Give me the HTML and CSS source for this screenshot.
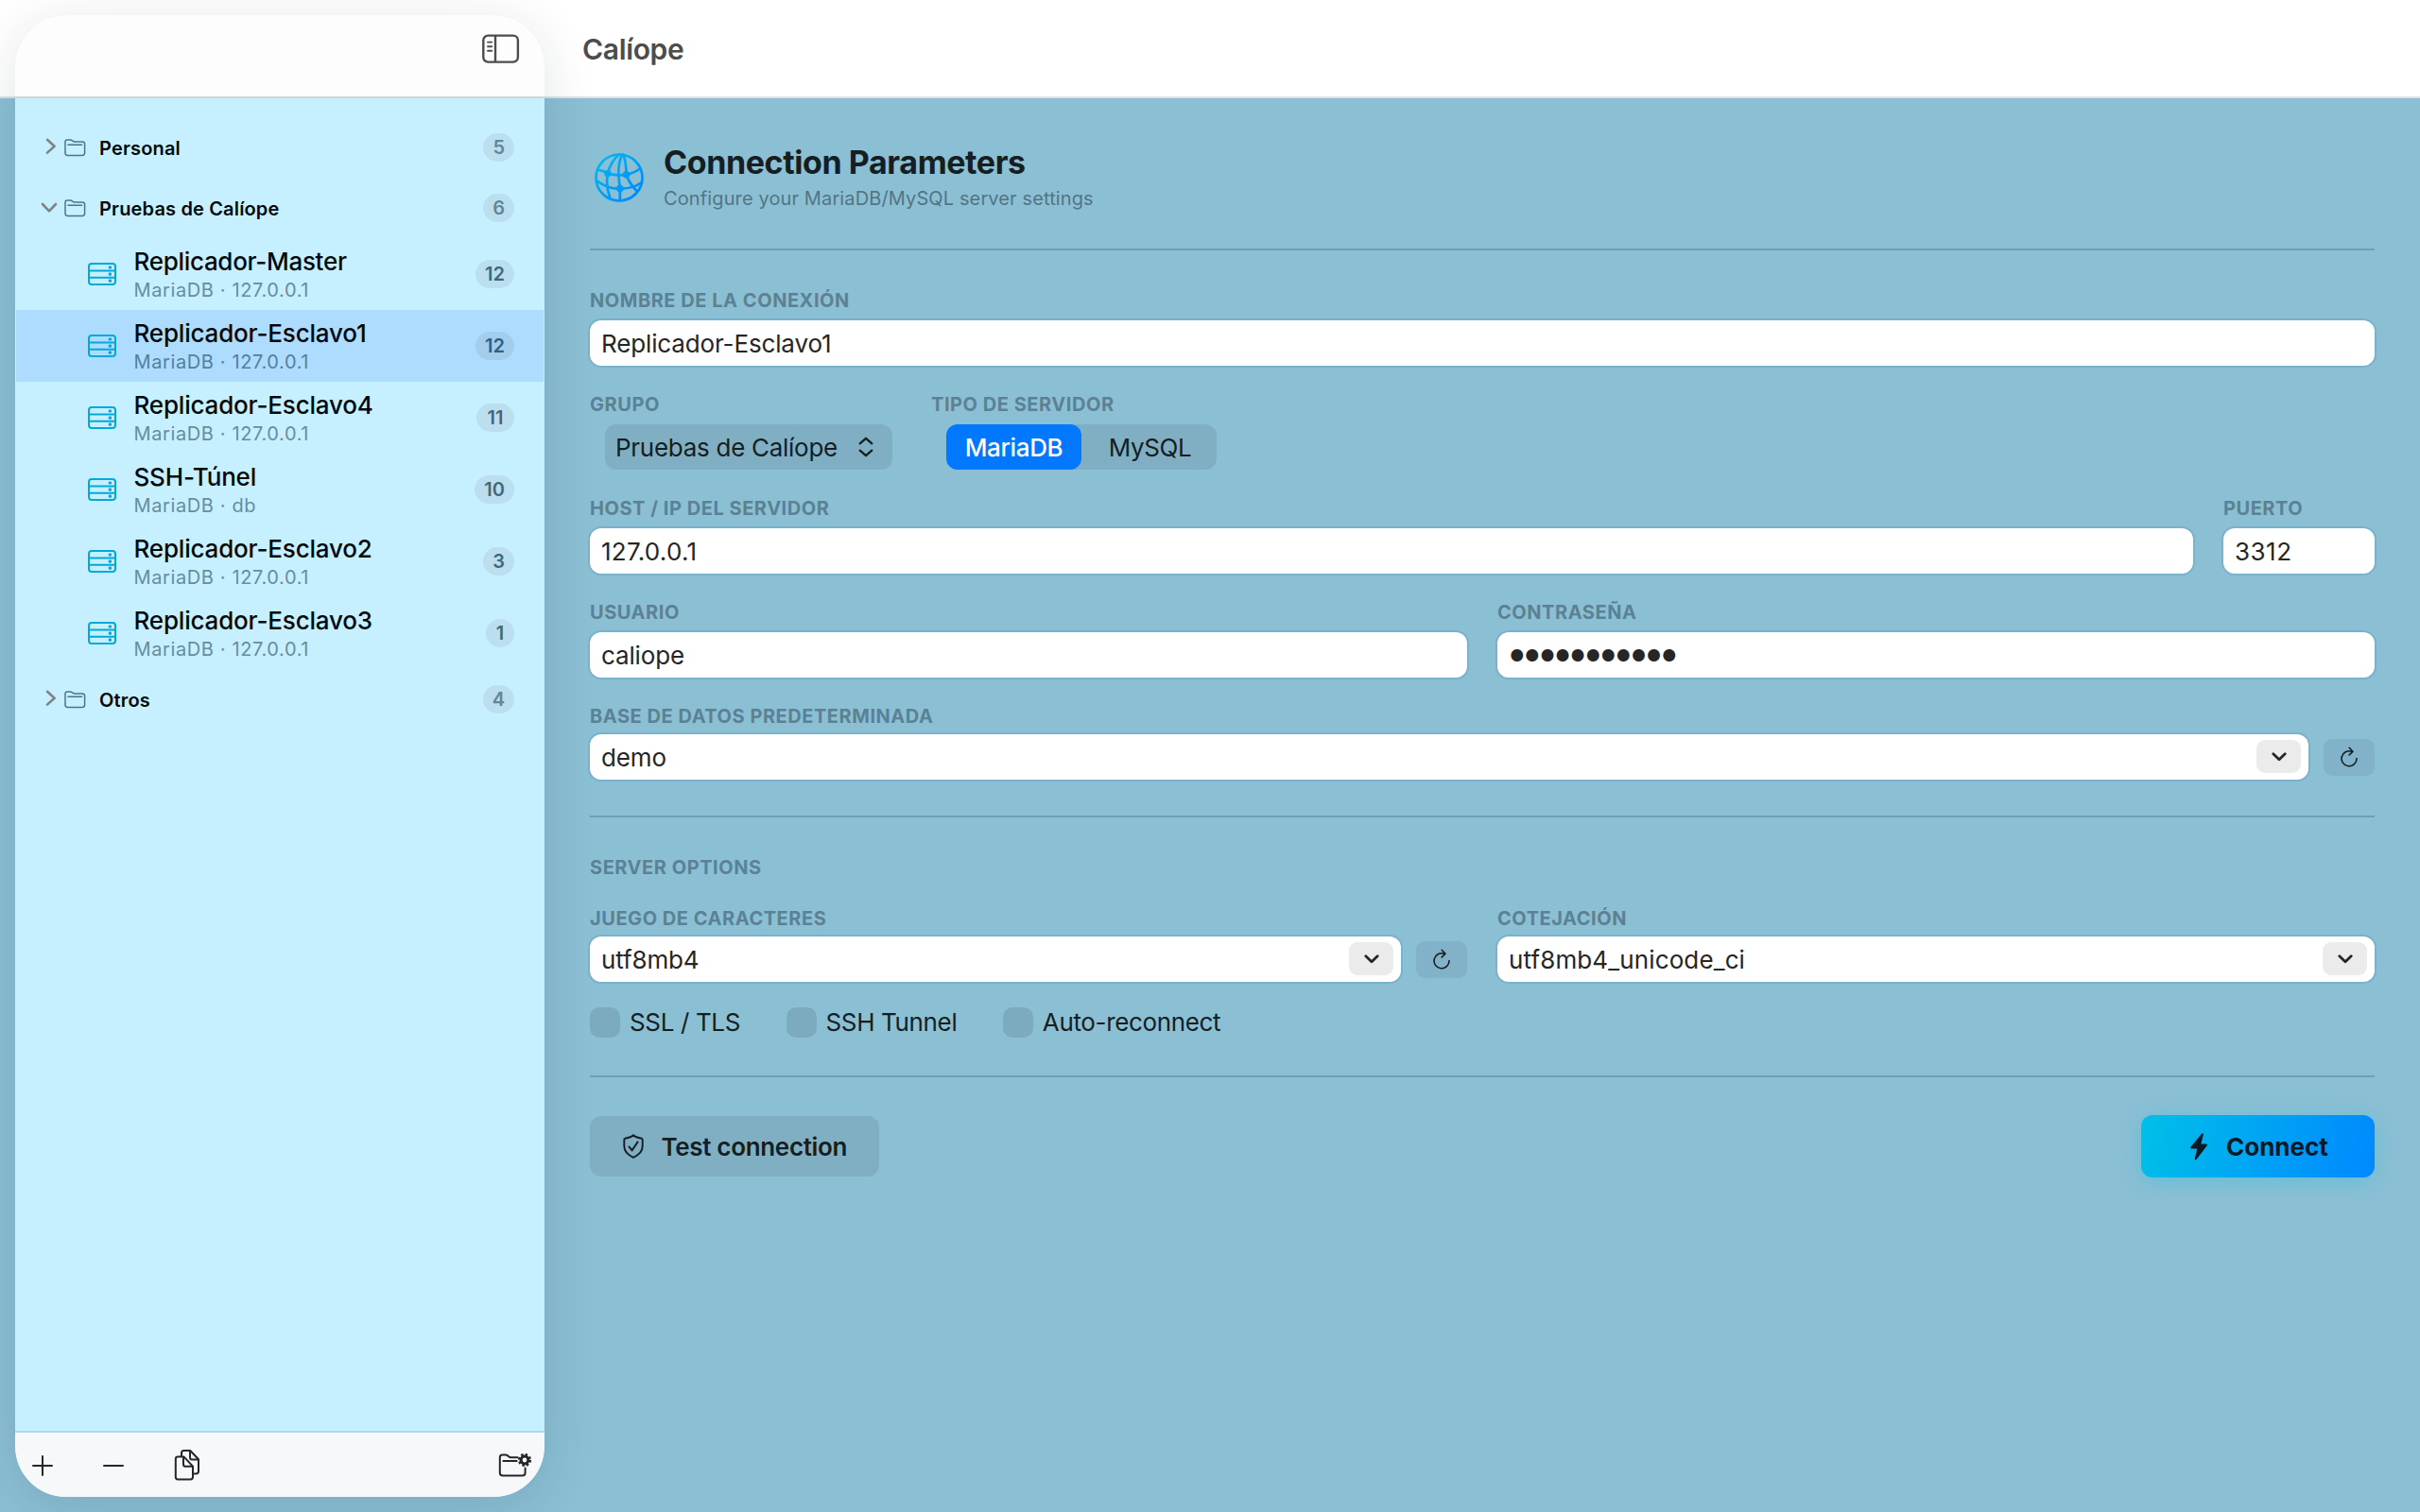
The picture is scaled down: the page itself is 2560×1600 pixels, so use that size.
FILE: index.html
```
<!DOCTYPE html>
<html lang="es">
<head>
<meta charset="utf-8">
<title>Calíope</title>
<link rel="stylesheet" href="styles.css">
</head>
<body>
<svg class="sprites" aria-hidden="true">
  <symbol id="folder" viewBox="0 0 24 20"><path d="M2 15.5V4.2Q2 2 4.2 2H7.6Q8.5 2 9.2 2.6L10.2 3.4Q10.8 3.9 11.8 3.9H20Q22.6 3.9 22.6 6.2V15.8Q22.6 18.4 20 18.4H4.6Q2 18.4 2 15.8Z M5 7.3H19.6" fill="none" stroke="currentColor" stroke-width="1.5" stroke-linecap="round"/></symbol>
  <symbol id="server" viewBox="0 0 30 24"><rect x="1" y="1" width="28" height="22" rx="3" fill="none" stroke="currentColor" stroke-width="2"/><path d="M1 8.6H29M1 15.7H29" stroke="currentColor" stroke-width="2"/><g fill="currentColor"><rect x="21.8" y="3.4" width="3.2" height="3.2" rx="1"/><rect x="21.8" y="10.5" width="3.2" height="3.2" rx="1"/><rect x="21.8" y="17.6" width="3.2" height="3.2" rx="1"/></g></symbol>
  <symbol id="right" viewBox="0 0 12 18"><path d="M2 1.8L9.6 8.8L2 15.6" fill="none" stroke="currentColor" stroke-width="2.6" stroke-linecap="round" stroke-linejoin="round"/></symbol>
  <symbol id="down" viewBox="0 0 18 12"><path d="M2 2L9 9.4L16 2" fill="none" stroke="currentColor" stroke-width="2.6" stroke-linecap="round" stroke-linejoin="round"/></symbol>
  <symbol id="caret" viewBox="0 0 16 10"><path d="M1.8 1.8L8 7.8L14.2 1.8" fill="none" stroke="currentColor" stroke-width="2.8" stroke-linecap="round" stroke-linejoin="round"/></symbol>
  <symbol id="refresh" viewBox="0 0 18 22"><path d="M11.7 5.2A8 8 0 1 0 17 12.6M9.2 1.3L13 5.2L9.2 8.9" fill="none" stroke="currentColor" stroke-width="1.6" stroke-linecap="round" stroke-linejoin="round"/></symbol>
</svg>
<div class="window">
  <header class="toolbar"><h1 class="app-title">Calíope</h1></header>

  <aside class="sidebar">
    <div class="sidebar-top">
      <svg class="toggle" viewBox="0 0 40 32"><rect x="1.3" y="1.6" width="36.6" height="28" rx="5" fill="none" stroke="currentColor" stroke-width="2.4"/><path d="M14 1.6V29.6" stroke="currentColor" stroke-width="2.4"/><path d="M6 8.6H10.2M6 13.2H10.2M6 17.8H10.2" stroke="currentColor" stroke-width="1.9" stroke-linecap="round"/></svg>
    </div>
    <nav class="tree">
      <div class="group"><svg class="chev-right"><use href="#right"/></svg><svg class="folder"><use href="#folder"/></svg><span class="group-name">Personal</span><span class="badge soft">5</span></div>
      <div class="group"><svg class="chev-down"><use href="#down"/></svg><svg class="folder"><use href="#folder"/></svg><span class="group-name">Pruebas de Calíope</span><span class="badge soft">6</span></div>
      <div class="item"><svg class="server"><use href="#server"/></svg><div class="item-text"><div class="item-name tight">Replicador-Master</div><div class="item-sub">MariaDB · 127.0.0.1</div></div><span class="badge">12</span></div>
      <div class="item selected"><svg class="server"><use href="#server"/></svg><div class="item-text"><div class="item-name">Replicador-Esclavo1</div><div class="item-sub">MariaDB · 127.0.0.1</div></div><span class="badge">12</span></div>
      <div class="item"><svg class="server"><use href="#server"/></svg><div class="item-text"><div class="item-name">Replicador-Esclavo4</div><div class="item-sub">MariaDB · 127.0.0.1</div></div><span class="badge pair">11</span></div>
      <div class="item"><svg class="server"><use href="#server"/></svg><div class="item-text"><div class="item-name">SSH-Túnel</div><div class="item-sub">MariaDB · db</div></div><span class="badge pair">10</span></div>
      <div class="item"><svg class="server"><use href="#server"/></svg><div class="item-text"><div class="item-name">Replicador-Esclavo2</div><div class="item-sub">MariaDB · 127.0.0.1</div></div><span class="badge">3</span></div>
      <div class="item"><svg class="server"><use href="#server"/></svg><div class="item-text"><div class="item-name">Replicador-Esclavo3</div><div class="item-sub">MariaDB · 127.0.0.1</div></div><span class="badge">1</span></div>
      <div class="group"><svg class="chev-right"><use href="#right"/></svg><svg class="folder"><use href="#folder"/></svg><span class="group-name">Otros</span><span class="badge soft">4</span></div>
    </nav>
    <footer class="sidebar-bottom">
      <svg class="plus" viewBox="0 0 22 22"><path d="M1 11H21M11 1V21" stroke="currentColor" stroke-width="2" stroke-linecap="round"/></svg>
      <svg class="minus" viewBox="0 0 22 22"><path d="M1 11H21" stroke="currentColor" stroke-width="2" stroke-linecap="round"/></svg>
      <svg class="copy" viewBox="0 0 28 34"><g fill="none" stroke="currentColor" stroke-width="2" stroke-linejoin="round" stroke-linecap="round"><path d="M8 7.6V4.5Q8 2 10.5 2H17.2L26 11.2V23.8Q26 26.4 23.4 26.4H21.6M17 2.4V9.2Q17 11.4 19 11.4H25.6"/><path d="M4.2 8.6H10.6L20 18.6V30Q20 32.4 17.6 32.4H4.2Q1.8 32.4 1.8 30V11Q1.8 8.6 4.2 8.6ZM10 9V16.4Q10 18.8 12.4 18.8H19.6"/></g></svg>
      <svg class="folder-gear" viewBox="0 0 36 28"><path d="M20.4 5.2H13.4Q12.2 5.2 11.4 4.5L10 3.4Q9 2.6 7.8 2.6H4.6Q1.8 2.6 1.8 5.4V21.4Q1.8 24.4 4.8 24.4H25.6Q28.6 24.4 28.6 21.4V16.6M5.4 9H19.6" fill="none" stroke="currentColor" stroke-width="2" stroke-linecap="round"/><circle cx="28" cy="8" r="3.9" fill="none" stroke="currentColor" stroke-width="3"/><circle cx="28" cy="8" r="5.9" fill="none" stroke="currentColor" stroke-width="2.4" stroke-dasharray="2.5 2.13"/></svg>
    </footer>
  </aside>

  <main class="content">
    <section class="heading">
      <svg class="globe" viewBox="0 0 52 52"><defs><linearGradient id="sky" gradientUnits="userSpaceOnUse" x1="0" y1="0" x2="52" y2="52"><stop offset="0" stop-color="#00c0f0"/><stop offset="1" stop-color="#0080ff"/></linearGradient></defs><g stroke="url(#sky)" fill="none" stroke-width="2.7" stroke-linecap="round"><circle cx="26" cy="26" r="24.5"/><path d="M26 1.5C20 6 16 13 14 21.5C12.4 29 13 39 16.5 48"/><path d="M29 1.6C25.5 10 25 18 25.4 24C25.8 30 26.6 33 26.8 37.5V50"/><path d="M30.5 1.8C32.6 8 33.6 15 33.5 22.7C36 30 39.5 35 45 40.5"/><path d="M3 17.5Q9 18.5 14 21.5Q24 24.5 33.5 22.7Q42 21 48 16.5"/><path d="M2 29Q6.5 32.6 13.5 35.5Q20 38 26.8 37.5Q40 38 50 31"/></g><g fill="url(#sky)"><circle cx="14" cy="21.5" r="3.8"/><circle cx="33.5" cy="22.7" r="3.8"/><circle cx="26.8" cy="37.5" r="3.8"/></g></svg>
      <div>
        <h2 class="heading-title">Connection Parameters</h2>
        <p class="heading-sub">Configure your MariaDB/MySQL server settings</p>
      </div>
    </section>
    <hr class="rule">

    <section class="fields">
      <div class="field"><label class="label">NOMBRE DE LA CONEXIÓN</label><div class="input">Replicador-Esclavo1</div></div>
      <div class="row type-row">
        <div class="field"><label class="label">GRUPO</label>
          <div class="popup"><span>Pruebas de Calíope</span><svg class="updown" viewBox="0 0 16 22"><path d="M1.7 7.3L8 1.8L14.3 7.3M1.7 14.7L8 20.2L14.3 14.7" fill="none" stroke="currentColor" stroke-width="2.3" stroke-linecap="round" stroke-linejoin="round"/></svg></div>
        </div>
        <div class="field"><label class="label">TIPO DE SERVIDOR</label>
          <div class="segments"><span class="segment active">MariaDB</span><span class="segment">MySQL</span></div>
        </div>
      </div>
      <div class="row">
        <div class="field grow"><label class="label">HOST / IP DEL SERVIDOR</label><div class="input address">127.0.0.1</div></div>
        <div class="field port"><label class="label">PUERTO</label><div class="input digits">3312</div></div>
      </div>
      <div class="row">
        <div class="field grow"><label class="label">USUARIO</label><div class="input">caliope</div></div>
        <div class="field grow"><label class="label">CONTRASEÑA</label><div class="input dots">●●●●●●●●●●●</div></div>
      </div>
      <div class="field combo-field"><label class="label">BASE DE DATOS PREDETERMINADA</label>
        <div class="combo-row"><div class="input combo">demo<span class="drop"><svg><use href="#caret"/></svg></span></div><span class="reload"><svg><use href="#refresh"/></svg></span></div>
      </div>
    </section>
    <hr class="rule">

    <section class="options">
      <h3 class="label">SERVER OPTIONS</h3>
      <div class="row">
        <div class="field combo-field grow"><label class="label">JUEGO DE CARACTERES</label>
          <div class="combo-row"><div class="input combo">utf8mb4<span class="drop"><svg><use href="#caret"/></svg></span></div><span class="reload"><svg><use href="#refresh"/></svg></span></div>
        </div>
        <div class="field combo-field grow"><label class="label">COTEJACIÓN</label>
          <div class="combo-row"><div class="input combo wide">utf8mb4_unicode_ci<span class="drop"><svg><use href="#caret"/></svg></span></div></div>
        </div>
      </div>
      <div class="checks">
        <label class="check"><span class="box"></span>SSL / TLS</label>
        <label class="check"><span class="box"></span>SSH Tunnel</label>
        <label class="check"><span class="box"></span>Auto-reconnect</label>
      </div>
    </section>
    <hr class="rule">

    <div class="actions">
      <div class="btn test"><svg class="shield" viewBox="0 0 22 26"><path d="M11 1.2C8.6 3.4 4.8 4.2 2.3 4.7Q1.3 5 1.3 6.2V13C1.3 18.6 5 22 11 24.8C17 22 20.7 18.6 20.7 13V6.2Q20.7 5 19.7 4.7C17.2 4.2 13.4 3.4 11 1.2ZM6.4 13.4L9.6 17.4L15.6 8.4" fill="none" stroke="currentColor" stroke-width="1.9" stroke-linecap="round" stroke-linejoin="round"/></svg>Test connection</div>
      <div class="btn connect"><svg class="bolt" viewBox="0 0 18 29"><path d="M12.2 .6Q14.2 -.2 13.8 1.8L11.3 11.6H17Q18.6 12 17.6 13.4L6.4 28Q4.6 29.2 4.8 27.2L7.2 16.6H1Q-.6 16.2 .4 14.8Z" fill="currentColor"/></svg>Connect</div>
    </div>
  </main>
</div>
</body>
</html>
```
FILE: styles.css
```
* { box-sizing: border-box; }
body {
  margin: 0;
  background: #8bbfd4;
  color: #151e22;
  font-family: Inter, "Liberation Sans", sans-serif;
  font-size: 26px;
}
h1, h2, h3, p { margin: 0; }
svg { display: block; flex: none; }
.sprites { display: none; }

.window {
  display: grid;
  grid-template: 104px 1496px / 592px 1fr;
  width: 2560px;
  height: 1600px;
  overflow: hidden;
}
.toolbar {
  grid-area: 1 / 1 / 2 / 3;
  display: flex;
  align-items: center;
  padding: 0 0 0 616px;
  background: #fff;
  border-bottom: 2px solid #dfe1e2;
}
.app-title {
  font-size: 30px;
  font-weight: 600;
  line-height: 40px;
  letter-spacing: -.35px;
  padding-top: 2px;
  color: #4c4c4c;
}

/* Floating sidebar */
.sidebar {
  grid-area: 1 / 1 / 3 / 2;
  z-index: 1;
  display: flex;
  flex-direction: column;
  margin: 16px;
  border-radius: 54px;
  overflow: hidden;
  background: #c6f0ff;
  box-shadow: 0 10px 56px rgba(0, 30, 50, .12);
  padding: 0 1px;
}
.sidebar-top {
  display: flex;
  align-items: flex-start;
  justify-content: flex-end;
  height: 88px;
  margin: 0 -1px;
  padding: 20px 26px 0 0;
  background: #fdfdfd;
  border-bottom: 2px solid #cfd6d8;
}
.toggle { width: 40px; height: 32px; color: #4c4c4c; }
.tree { flex: 1; padding-top: 20px; }
.group {
  display: flex;
  align-items: center;
  height: 64px;
  padding: 0 31px 0 26px;
}
.chev-right { width: 12px; height: 18px; margin: -3px 7px 0 5px; color: #808487; }
.chev-down { width: 18px; height: 12px; margin: 0 6px 0 0; color: #808487; }
.folder { width: 24px; height: 20px; margin-right: 14px; color: #4b7587; }
.group-name {
  flex: 1;
  padding-top: 1px;
  font-size: 20px;
  font-weight: 600;
  letter-spacing: .16px;
  color: #04080a;
}
.badge {
  min-width: 30px;
  height: 30px;
  padding: 0 10px;
  border-radius: 15px;
  background: #bbdfee;
  color: #43687a;
  font-size: 20px;
  font-weight: 600;
  line-height: 31px;
  text-align: center;
}
.pair { min-width: 40px; }
.soft { color: #5f8798; }
.item {
  display: flex;
  align-items: center;
  height: 76px;
  padding: 0 31px 0 76px;
}
.selected { background: #addcff; }
.selected .badge { background: #a4cdec; color: #345f80; }
.selected .item-sub { color: #5480a0; }
.server { width: 30px; height: 24px; margin-right: 18.5px; color: #00a9da; }
.item-text { flex: 1; padding-top: 1px; }
.item-name {
  font-weight: 500;
  line-height: 32px;
  letter-spacing: -.18px;
  color: #04080a;
}
.tight { letter-spacing: -.3px; }
.item-sub {
  font-size: 20px;
  line-height: 28px;
  letter-spacing: .62px;
  color: #668da0;
}
.sidebar-bottom {
  display: flex;
  align-items: center;
  height: 70px;
  margin: 0 -1px;
  padding: 2px 13px 0 18px;
  border-top: 2px solid #afd9ea;
  background: #f6f8fa;
  color: #242628;
}
.plus { width: 22px; height: 22px; }
.minus { width: 22px; height: 22px; margin-left: 53px; }
.copy { width: 28px; height: 34px; margin: -2px 0 0 53px; }
.folder-gear { width: 36px; height: 28px; margin-left: auto; }

/* Connection form */
.content { grid-area: 2 / 2 / 3 / 3; padding: 48px 48px 0 32px; }
.heading { display: flex; align-items: center; gap: 21px; height: 118px; padding: 0 0 46px 5px; }
.globe { width: 52px; height: 52px; }
.heading-title {
  margin-top: -3px;
  font-size: 34px;
  font-weight: 700;
  line-height: 40px;
  letter-spacing: -.41px;
}
.heading-sub {
  margin-top: 6px;
  font-size: 20px;
  line-height: 24px;
  letter-spacing: .12px;
  color: #537583;
}
.rule {
  height: 2px;
  margin: 0;
  border: 0;
  background: #6fa0b3;
}
.heading + .rule { margin-top: -7px; }
.fields { display: flex; flex-direction: column; gap: 29px; padding: 41px 0 38px; }
.row { display: flex; gap: 32px; }
.type-row { gap: 41px; }
.field { display: flex; flex-direction: column; gap: 9px; }
.combo-field { gap: 7px; }
.grow { flex: 1; }
.port { width: 160px; }
.label {
  height: 24px;
  font-size: 20px;
  font-weight: 700;
  line-height: 25px;
  letter-spacing: .54px;
  color: #5b8294;
}
.input {
  height: 48px;
  padding: 0 12px;
  border-radius: 12px;
  background: #fff;
  box-shadow: 0 0 0 2px rgba(100, 160, 190, .4);
  color: #262626;
  line-height: 50px;
  letter-spacing: -.14px;
}
.address { letter-spacing: .28px; }
.digits { letter-spacing: .5px; }
.dots { padding-left: 13px; font-size: 17px; line-height: 50px; letter-spacing: .55px; }
.popup {
  display: flex;
  align-items: center;
  justify-content: space-between;
  width: 304px;
  height: 48px;
  margin-left: 16px;
  padding: 0 20px 0 11px;
  border-radius: 12px;
  background: #80afc3;
  line-height: 50px;
  letter-spacing: -.28px;
}
.popup span { padding-top: 1px; }
.updown { width: 16px; height: 22px; }
.segments {
  display: flex;
  width: 286px;
  height: 48px;
  margin-left: 16px;
  border-radius: 12px;
  background: #80afc3;
  line-height: 50px;
}
.segment { width: 143px; padding-left: 2px; text-align: center; letter-spacing: -.35px; }
.active {
  padding: 0;
  border-radius: 12px;
  background: #0178ff;
  color: #fff;
  font-weight: 500;
}
.combo-row { display: flex; align-items: center; gap: 16px; }
.combo {
  flex: 1;
  display: flex;
  align-items: center;
  justify-content: space-between;
  padding: 2px 8px 0 12px;
}
.wide { letter-spacing: .12px; }
.drop {
  display: flex;
  align-items: center;
  justify-content: center;
  width: 47px;
  height: 35px;
  margin-top: -3px;
  border-radius: 9px;
  background: #ebebeb;
}
.drop svg { width: 16px; height: 10px; }
.reload {
  display: flex;
  align-items: center;
  justify-content: center;
  width: 54px;
  height: 39px;
  border-radius: 9px;
  background: #81b2c9;
}
.reload svg { width: 18px; height: 22px; }

.options { padding: 41px 0 40px; }
.options > .row { margin-top: 30px; }
.checks { display: flex; gap: 48.5px; height: 32px; margin-top: 27px; }
.check { display: flex; align-items: center; gap: 10px; line-height: 32px; letter-spacing: -.36px; }
.box { width: 32px; height: 32px; border-radius: 10px; background: #7cabc0; }

.actions { display: flex; align-items: center; justify-content: space-between; padding-top: 40px; }
.btn { display: flex; align-items: center; border-radius: 12px; }
.test {
  width: 306px;
  height: 64px;
  padding-left: 35px;
  gap: 18.5px;
  background: #80afc3;
  font-weight: 600;
  letter-spacing: -.33px;
}
.shield { width: 22px; height: 26px; }
.connect {
  width: 247px;
  height: 66px;
  padding-left: 52px;
  gap: 20px;
  background: linear-gradient(105deg, #00c0e8, #0088ff);
  box-shadow: 0 4px 24px rgba(0, 192, 232, .3);
  color: #061b26;
  font-weight: 700;
}
.bolt { width: 18px; height: 29px; }
```
